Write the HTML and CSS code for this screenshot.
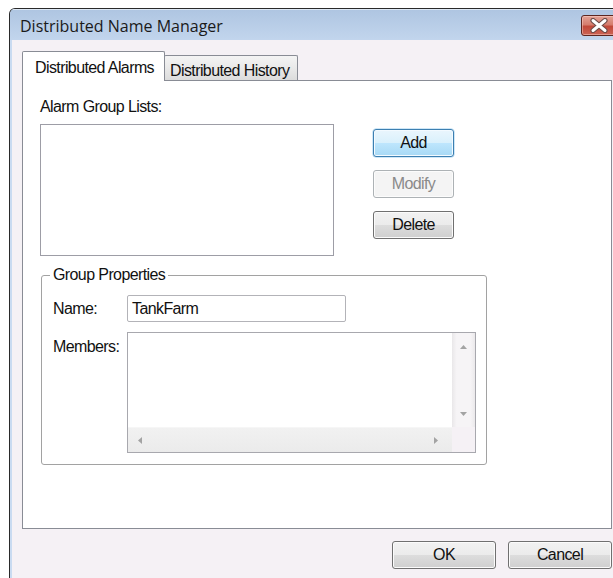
FILE: index.html
```html
<!DOCTYPE html>
<html lang="en">
<head>
<meta charset="utf-8">
<title>Distributed Name Manager</title>
<link rel="stylesheet" href="styles.css">
</head>
<body>
<div class="window">
  <div class="titlebar">
    <span class="title">Distributed Name Manager</span>
    <button class="close" aria-label="Close">
      <svg width="20" height="15" viewBox="0 0 20 15">
        <path d="M4 2.5 L16 12.5 M16 2.5 L4 12.5" stroke="#6e4d49" stroke-width="5.2" stroke-linecap="round"/>
        <path d="M4 2.5 L16 12.5 M16 2.5 L4 12.5" stroke="#ffffff" stroke-width="3" stroke-linecap="round"/>
      </svg>
    </button>
  </div>
  <div class="client">
    <div class="tabs">
      <div class="tab tab-active">Distributed Alarms</div>
      <div class="tab">Distributed History</div>
    </div>
    <div class="page">
      <div class="top-row">
        <div class="list-col">
          <div class="label">Alarm Group Lists:</div>
          <div class="listbox"></div>
        </div>
        <div class="btn-col">
          <button class="btn btn-default">Add</button>
          <button class="btn" disabled>Modify</button>
          <button class="btn">Delete</button>
        </div>
      </div>
      <fieldset class="group">
        <legend>Group Properties</legend>
        <div class="field-row">
          <label class="field-label">Name:</label>
          <div class="textbox">TankFarm</div>
        </div>
        <div class="field-row members-row">
          <label class="field-label members-label">Members:</label>
          <div class="memo">
            <div class="memo-body"></div>
            <div class="vscroll">
              <svg width="7" height="4" viewBox="0 0 7 4"><polygon points="0,4 3.5,0 7,4" fill="#a3a3a3"/></svg>
              <svg width="7" height="4" viewBox="0 0 7 4"><polygon points="0,0 7,0 3.5,4" fill="#a3a3a3"/></svg>
            </div>
            <div class="hscroll">
              <svg width="4" height="7" viewBox="0 0 4 7"><polygon points="4,0 0,3.5 4,7" fill="#a3a3a3"/></svg>
              <svg width="4" height="7" viewBox="0 0 4 7"><polygon points="0,0 4,3.5 0,7" fill="#a3a3a3"/></svg>
            </div>
            <div class="corner"></div>
          </div>
        </div>
      </fieldset>
    </div>
    <div class="footer">
      <button class="btn btn-wide">OK</button>
      <button class="btn btn-wide">Cancel</button>
    </div>
  </div>
</div>
</body>
</html>
```

FILE: styles.css
```css
* {
  box-sizing: border-box;
}

html,
body {
  margin: 0;
}

body {
  width: 613px;
  height: 578px;
  overflow: hidden;
  background: #ffffff;
  font-family: "Liberation Sans", Arial, sans-serif;
  font-size: 16px;
  letter-spacing: -0.6px;
  color: #111111;
}

/* Window frame */
.window {
  margin: 8px 0 0 9px;
  width: 616px;
  height: 590px;
  border: 1px solid #2a2a2a;
  border-bottom: none;
  border-radius: 6px 6px 0 0;
  background: #c9dbf1;
  display: flex;
  flex-direction: column;
  overflow: hidden;
}

.titlebar {
  height: 31px;
  flex: none;
  display: flex;
  align-items: flex-start;
  padding-left: 10px;
  background: linear-gradient(#aec5e1, #c2d5ed);
  box-shadow: inset 0 1px 0 #dde8f5;
}

.title {
  font-family: "Open Sans", "Noto Sans", sans-serif;
  font-size: 16px;
  letter-spacing: 0;
  line-height: 22px;
  padding-top: 6px;
  color: #1a1a1a;
}

.close {
  margin: 6px 8px 0 auto;
  width: 35px;
  height: 21px;
  padding: 0;
  border: 1px solid #5d2620;
  border-radius: 3px;
  background: linear-gradient(#e3a296 0%, #d57d6e 45%, #c2493a 55%, #cc6455 100%);
  box-shadow: inset 0 0 0 1px rgba(255, 220, 210, 0.45);
  display: flex;
  align-items: center;
  justify-content: center;
}

/* Client area */
.client {
  flex: 1;
  margin: 0 2px;
  background: #f5f1f5;
  padding: 11px 10px 0 10px;
}

.tabs {
  height: 29px;
  display: flex;
  align-items: flex-end;
}

.tab {
  height: 25px;
  width: 134px;
  margin-left: -1px;
  padding: 6px 0 0 5px;
  line-height: 18px;
  border: 1px solid #898c95;
  border-bottom: none;
  border-radius: 2px 2px 0 0;
  background: linear-gradient(#f4f4f4, #e9e9e9 50%, #dcdcdc);
  white-space: nowrap;
}

.tab-active {
  position: relative;
  z-index: 1;
  height: 30px;
  width: 143px;
  margin: 0 0 -1px 0;
  padding: 7px 0 0 12px;
  background: #ffffff;
}

.page {
  height: 449px;
  border: 1px solid #898c95;
  background: #ffffff;
  padding: 17px 0 0 17px;
}

.top-row {
  display: flex;
}

.label {
  line-height: 18px;
}

.listbox {
  margin-top: 8px;
  width: 294px;
  height: 132px;
  border: 1px solid #9d9da6;
  background: #ffffff;
}

.btn-col {
  margin-left: 39px;
  padding-top: 31px;
  display: flex;
  flex-direction: column;
  gap: 13px;
}

/* Push buttons */
.btn {
  width: 81px;
  height: 28px;
  padding: 0;
  font: inherit;
  letter-spacing: inherit;
  line-height: 26px;
  color: #111111;
  border: 1px solid #707070;
  border-radius: 3px;
  background: linear-gradient(#f2f2f2, #ebebeb 50%, #dddddd 50%, #cfcfcf);
  box-shadow: inset 0 0 0 1px #fbfbfb;
}

.btn-default {
  border-color: #3c7fb1;
  background: linear-gradient(#eaf6fd, #d9f0fc 50%, #bee6fd 50%, #a7d9f5);
  box-shadow: inset 0 0 0 1px #f3faff, 0 0 0 0.5px #9fd0f0;
}

.btn:disabled {
  color: #8a8a8a;
  border-color: #adb2b5;
  background: #f4f4f4;
  box-shadow: inset 0 0 0 1px #fcfcfc;
}

.btn-wide {
  width: 104px;
}

/* Group box */
.group {
  margin: 10px 0 0 1px;
  width: 446px;
  padding: 11px 10px 11px 11px;
  border: 1px solid #a2a2a2;
  border-radius: 3px;
  min-inline-size: auto;
}

.group legend {
  margin-left: -3px;
  padding: 0 3px;
  line-height: 18px;
}

.field-row {
  display: flex;
  align-items: center;
}

.field-label {
  width: 74px;
  flex: none;
  line-height: 18px;
}

.textbox {
  width: 219px;
  height: 27px;
  border: 1px solid #b3b3b8;
  border-radius: 2px;
  padding-left: 4px;
  line-height: 25px;
  background: #ffffff;
}

.members-row {
  margin-top: 10px;
  align-items: flex-start;
}

.members-label {
  padding-top: 6px;
}

.memo {
  width: 349px;
  height: 121px;
  border: 1px solid #a8a8ae;
  background: #ffffff;
  display: grid;
  grid-template-columns: 1fr 23px;
  grid-template-rows: 1fr 25px;
}

.memo-body {
  grid-column: 1;
  grid-row: 1;
}

.vscroll {
  grid-column: 2;
  grid-row: 1;
  display: flex;
  flex-direction: column;
  justify-content: space-between;
  align-items: center;
  padding: 12px 0 11px;
  background: linear-gradient(to right, #e9e7e9, #f6f4f6 20%, #f6f4f6 80%, #ebe9eb);
}

.hscroll {
  grid-column: 1;
  grid-row: 2;
  display: flex;
  justify-content: space-between;
  align-items: center;
  padding: 0 14px 0 10px;
  background: linear-gradient(#f1f1f1, #ebebeb);
  border-top: 1px solid #f6f6f6;
}

.corner {
  grid-column: 2;
  grid-row: 2;
  background: #f5f1f5;
}

.vscroll svg,
.hscroll svg {
  display: block;
}

/* Dialog buttons */
.footer {
  margin-top: 12px;
  display: flex;
  justify-content: flex-end;
  gap: 12px;
}
```
